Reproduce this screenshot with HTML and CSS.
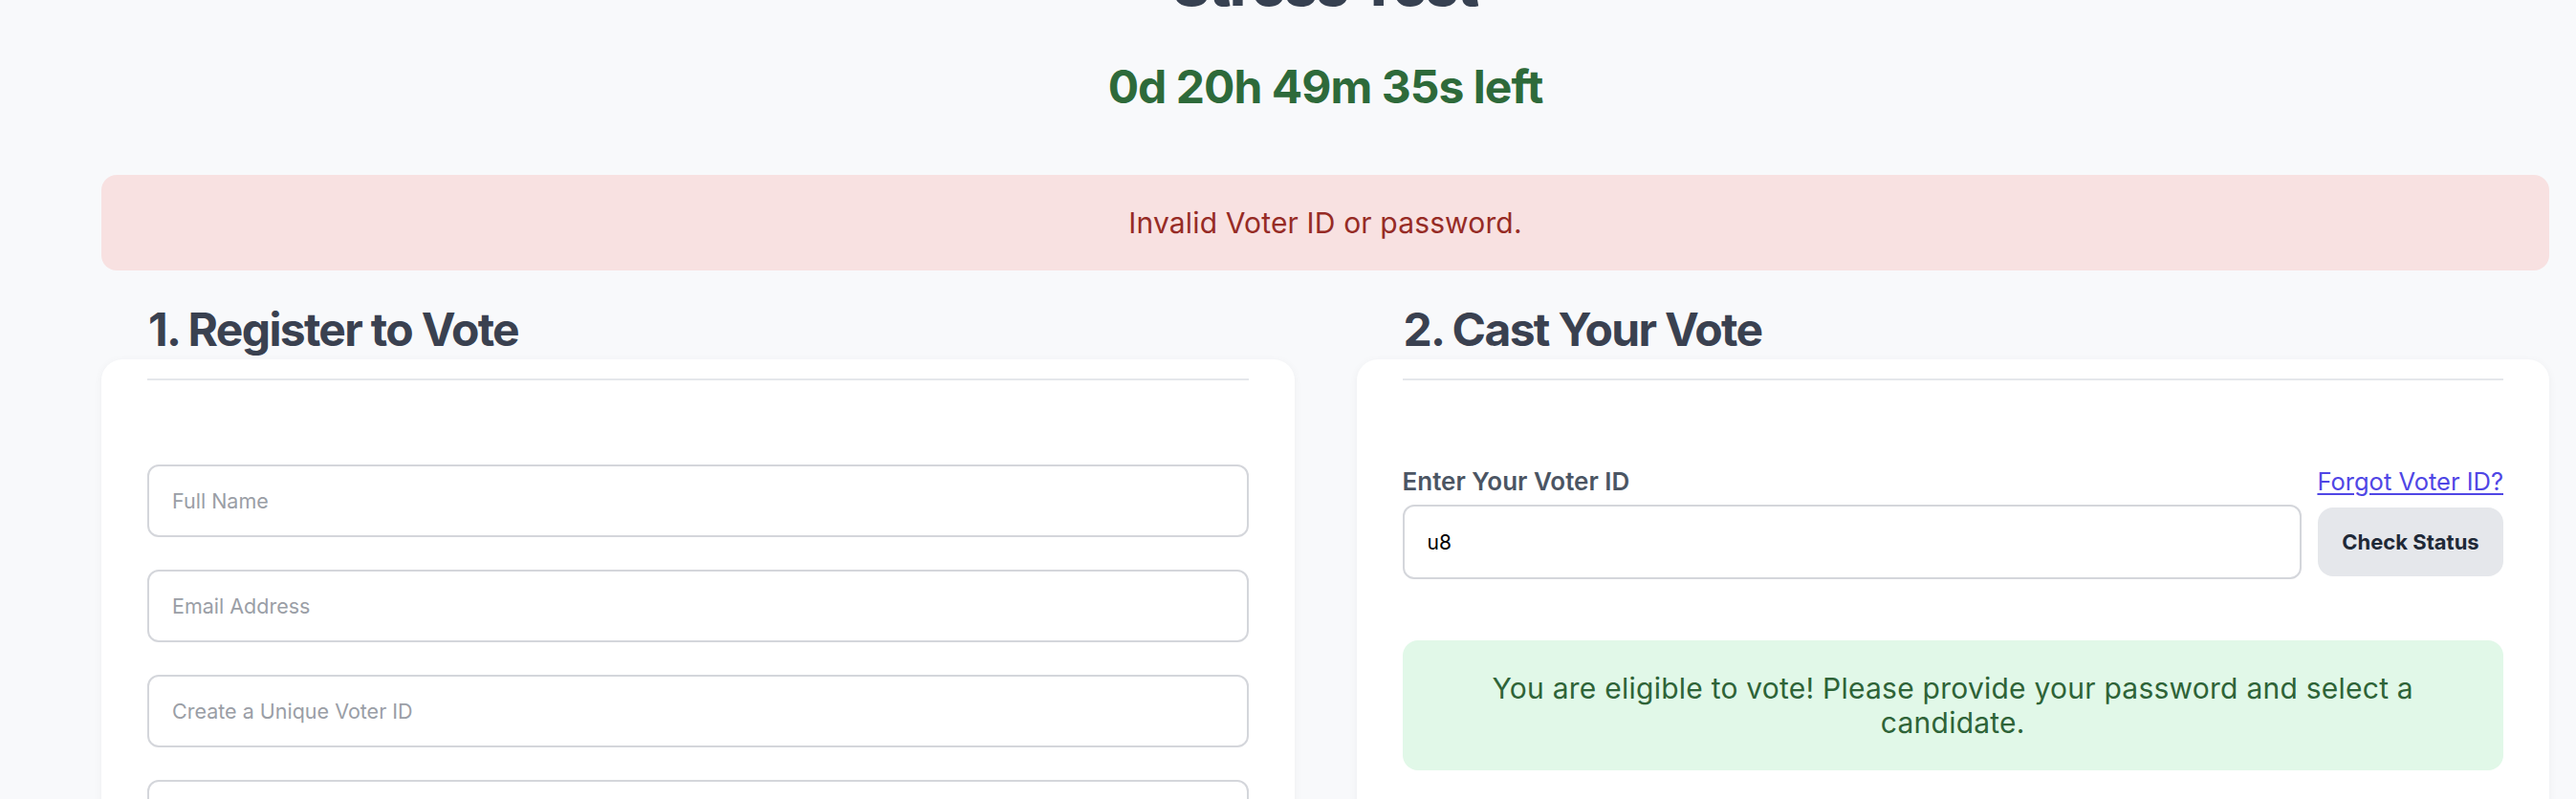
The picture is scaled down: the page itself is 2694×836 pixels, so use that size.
FILE: index.html
```html
<!DOCTYPE html>
<html lang="en">
<head>
<meta charset="utf-8">
<title>Stress Test</title>
<link rel="stylesheet" href="styles.css">
</head>
<body>
<div class="page">
  <header class="header">
    <h1 class="title">Stress Test</h1>
    <p class="timer">0d 20h 49m 35s left</p>
  </header>

  <div class="alert alert-error">Invalid Voter ID or password.</div>

  <div class="columns">
    <section class="column">
      <h2 class="section-title">1. Register to Vote</h2>
      <div class="card">
        <div class="divider"></div>
        <form class="form">
          <input class="field" type="text" placeholder="Full Name">
          <input class="field" type="email" placeholder="Email Address">
          <input class="field" type="text" placeholder="Create a Unique Voter ID">
          <input class="field" type="password" placeholder="Create a Password">
        </form>
      </div>
    </section>

    <section class="column">
      <h2 class="section-title">2. Cast Your Vote</h2>
      <div class="card">
        <div class="divider"></div>
        <div class="form form-vote">
          <div class="label-row">
            <label class="label" for="voter-id">Enter Your Voter ID</label>
            <a class="link" href="#">Forgot Voter ID?</a>
          </div>
          <div class="id-row">
            <input id="voter-id" class="field field-id" type="text" value="u8">
            <button class="btn" type="button">Check Status</button>
          </div>
          <div class="alert alert-success">You are eligible to vote! Please provide your password and select a candidate.</div>
        </div>
      </div>
    </section>
  </div>
</div>
</body>
</html>
```

FILE: styles.css
```css
* { box-sizing: border-box; }

html, body {
  margin: 0;
  padding: 0;
}

body {
  background: #f8f9fb;
  font-family: Inter, "Noto Sans", "Liberation Sans", sans-serif;
  color: #374151;
  overflow: hidden;
}

.page {
  width: 2560px;
  margin-left: 106px;
}

.header {
  text-align: center;
}

.title {
  margin: -46px 0 0;
  font-size: 60px;
  line-height: 60px;
  font-weight: 800;
  letter-spacing: -0.02em;
  color: #374151;
}

.timer {
  margin: 53px 0 0;
  font-size: 48px;
  line-height: 48px;
  font-weight: 700;
  letter-spacing: -0.02em;
  color: #2e6a3a;
}

.alert {
  border-radius: 16px;
  text-align: center;
  font-size: 30px;
  line-height: 36px;
}

.alert-error {
  margin-top: 68px;
  height: 100px;
  padding: 32px 48px;
  background: #f8e1e1;
  color: #962b25;
  letter-spacing: 0.005em;
}

.columns {
  display: grid;
  grid-template-columns: 1fr 1fr;
  column-gap: 65px;
  margin-top: 32px;
}

.section-title {
  margin: 0;
  padding-left: 49px;
  font-size: 48px;
  line-height: 60px;
  font-weight: 700;
  letter-spacing: -0.035em;
  color: #3a4150;
}

.card {
  margin-top: 1px;
  background: #ffffff;
  border-radius: 22px;
  box-shadow: 0 2px 10px rgba(15, 23, 42, 0.05);
  padding: 20px 48px 60px;
  height: 520px;
}

.divider {
  height: 2px;
  background: #e5e7eb;
}

.form {
  display: flex;
  flex-direction: column;
  margin-top: 88px;
}

.form-vote {
  margin-top: 90px;
}

form.form {
  gap: 34px;
}

.field {
  display: block;
  width: 100%;
  height: 76px;
  border: 2px solid #d4d6db;
  border-radius: 12px;
  background: #fff;
  padding: 0 24px;
  font-family: Inter, "Noto Sans", "Liberation Sans", sans-serif;
  font-size: 21.5px;
  color: #111;
  outline: none;
}

.field::placeholder {
  color: #9a9ea6;
}

.label-row {
  display: flex;
  justify-content: space-between;
  align-items: baseline;
  height: 32px;
}

.label {
  font-size: 26px;
  line-height: 32px;
  font-weight: 600;
  color: #4b5563;
}

.link {
  font-size: 25.5px;
  line-height: 32px;
  color: #4f46e5;
  text-decoration: underline;
  text-underline-offset: 3px;
}

.id-row {
  display: flex;
  align-items: center;
  gap: 17px;
  margin-top: 8px;
}

.field-id {
  flex: 1;
  height: 78px;
  font-size: 21px;
  color: #000;
}

.btn {
  flex: none;
  width: 194px;
  height: 72px;
  border: none;
  border-radius: 16px;
  background: #e5e7eb;
  color: #1f2937;
  font-family: Inter, "Noto Sans", "Liberation Sans", sans-serif;
  font-size: 22px;
  font-weight: 700;
}

.alert-success {
  margin-top: 64px;
  padding: 32px 48px;
  background: #e1f8e8;
  color: #2e6337;
  letter-spacing: 0.008em;
}
```
